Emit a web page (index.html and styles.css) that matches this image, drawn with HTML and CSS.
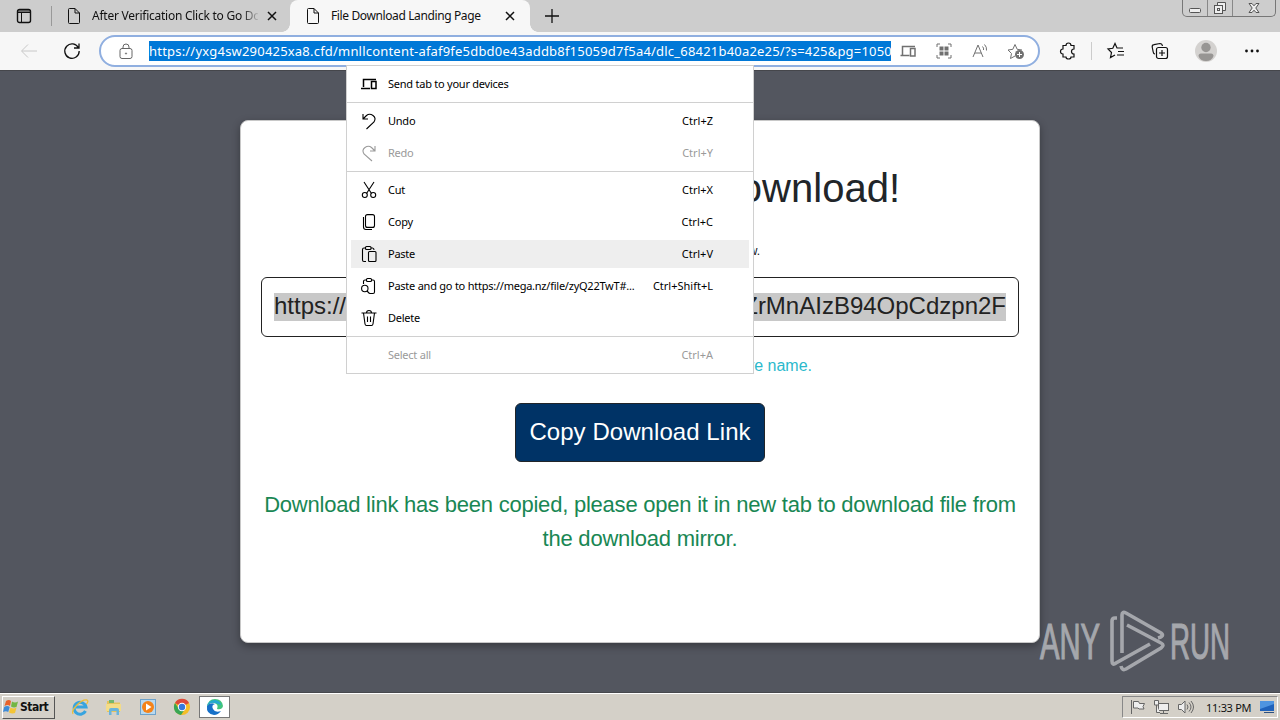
FILE: index.html
```html
<!DOCTYPE html>
<html lang="en">
<head>
<meta charset="utf-8">
<title>File Download Landing Page</title>
<link rel="stylesheet" href="styles.css">
</head>
<body>
<div class="desktop">
  <header class="tabbar">
    <svg class="tabactions" width="16" height="16" viewBox="0 0 16 16"><rect x="1.500" y="1.500" width="13" height="13" rx="2" stroke-width="1.400"/><path d="M2 3h12M2 4.500h12M5.500 5v9"/></svg>
    <span class="tabsep"></span>
    <div class="tab">
      <svg class="doc" width="14" height="18" viewBox="0 0 14 18"><path d="M1.500 2.500q0-1 1-1H8l4.500 4.500V15.500q0 1-1 1h-9q-1 0-1-1zM8 1.500V6h4.500"/></svg>
      <span class="tabtitle first">After Verification Click to Go Do</span>
      <svg class="close" width="10" height="10" viewBox="0 0 10 10"><path d="M1 1l8 8M9 1L1 9"/></svg>
    </div>
    <div class="tab active">
      <svg class="doc" width="14" height="18" viewBox="0 0 14 18"><path d="M1.500 2.500q0-1 1-1H8l4.500 4.500V15.500q0 1-1 1h-9q-1 0-1-1zM8 1.500V6h4.500"/></svg>
      <span class="tabtitle second">File Download Landing Page</span>
      <svg class="close" width="10" height="10" viewBox="0 0 10 10"><path d="M1 1l8 8M9 1L1 9"/></svg>
    </div>
    <svg class="plus" width="16" height="16" viewBox="0 0 16 16"><path d="M8 1v14M1 8h14"/></svg>
    <div class="wincontrols">
      <span class="winbtn"><svg width="14" height="14" viewBox="0 0 14 14"><rect x="1.500" y="7.500" width="11" height="4" rx="1"/></svg></span>
      <span class="winbtn"><svg width="14" height="14" viewBox="0 0 14 14"><path d="M4.500 4V1.500h8v8H10"/><rect x="1.500" y="4.500" width="8" height="8"/><rect x="4.500" y="7.500" width="2" height="2"/></svg></span>
      <span class="winbtn wide"><svg width="14" height="14" viewBox="0 0 14 14"><path d="M2 2.500h3l2 2.300 2-2.300h3L8.800 7l3.200 4.500H9L7 9.200l-2 2.300H2L5.200 7z"/></svg></span>
    </div>
  </header>

  <nav class="toolbar">
    <svg class="back" width="18" height="16" viewBox="0 0 18 16"><path d="M17 8H2M8 1.500L1.500 8 8 14.500"/></svg>
    <svg class="reload" width="18" height="18" viewBox="0 0 18 18"><path d="M15.500 6A7.200 7.200 0 1 0 16.200 9M16 1.500V6h-5"/></svg>
    <div class="address">
      <svg class="lock" width="14" height="17" viewBox="0 0 14 17"><rect x="1" y="5.500" width="12" height="10" rx="2"/><path d="M4 5.500V4q0-3 3-3t3 3v1.500"/><circle cx="7" cy="10.500" r=".6"/></svg>
      <span class="url">https://yxg4sw290425xa8.cfd/mnllcontent-afaf9fe5dbd0e43addb8f15059d7f5a4/dlc_68421b40a2e25/?s=425&amp;pg=1050</span>
      <div class="tools">
        <svg width="16" height="14" viewBox="0 0 16 14"><path d="M2.500 10V2.500H15M.5 11.500h9M2.500 11V3" stroke-width="1.500"/><rect x="10.500" y="4.500" width="4.500" height="7.500" stroke-width="1.500"/></svg>
        <svg width="16" height="16" viewBox="0 0 16 16"><path d="M1 4V1h3M12 1h3v3M15 12v3h-3M4 15H1v-3"/><path class="fill" d="M3.500 3.500h4v4h-4zM8.500 3.500h4v4h-4zM3.500 8.500h4v4h-4zM8.500 8.500h4v4h-4z"/></svg>
        <svg width="17" height="16" viewBox="0 0 17 16"><path d="M1 14L6 2l5 12M3 10h6M10.500 3.500q1.500 1.500 1 3.500M12.500 1.500q2.500 2.500 2 6"/></svg>
        <svg class="addfav" width="18" height="17" viewBox="0 0 18 17"><path d="M8 13l-4.500 2.500 1-5L1 7l4.800-.7L8 1.500l2.200 4.800L15 7"/><circle class="fill" cx="12.500" cy="11.500" r="4.500"/><path class="white" d="M12.500 9v5M10 11.500h5"/></svg>
      </div>
    </div>
    <div class="actions">
      <svg width="18" height="18" viewBox="0 0 18 18"><path d="M4 3.500h3q0-2.500 2.500-2.500T12 3.500h3V7q-2.500 0-2.500 2.500T15 12v3h-3q0 2-2.500 2T7 15H4v-3q-2.500 0-2.500-2.500T4 7z"/></svg>
      <span class="divider"></span>
      <svg class="fav" width="18" height="18" viewBox="0 0 18 18"><path d="M8 13l-4.500 2.500 1-5L1 7l4.800-.7L8 1.500l2 4.500h6M11 9.500h6M10 13h7"/></svg>
      <svg class="coll" width="18" height="18" viewBox="0 0 18 18"><path d="M4 12Q2.500 12 2.200 10L1.200 5Q1 3 3 2.700L9 1.500q2 0 2.500 2.500"/><rect x="5.500" y="5.500" width="11" height="11" rx="2"/><path d="M11 8v6M8 11h6"/></svg>
      <svg class="avatar" width="24" height="24" viewBox="0 0 24 24"><circle cx="12" cy="12" r="11" fill="#d4d2d0"/><circle cx="12" cy="8.500" r="4.700" fill="#979593"/><path d="M4.500 17q0-2.500 2.500-2.500h10q2.500 0 2.500 2.500-1.500 5-7.500 5t-7.500-5" fill="#979593"/></svg>
      <svg class="dots" width="16" height="4" viewBox="0 0 16 4"><circle cx="2.500" cy="2" r="1.400"/><circle cx="8" cy="2" r="1.400"/><circle cx="13.500" cy="2" r="1.400"/></svg>
    </div>
  </nav>

  <main class="page">
    <section class="card">
      <h1>Download!</h1>
      <p class="hint">w.</p>
      <div class="linkbox"><span class="sel"><span>https://</span><span>ZrMnAIzB94OpCdzpn2F</span></span></div>
      <p class="note">ve name.</p>
      <button class="copy">Copy Download Link</button>
      <p class="success">Download link has been copied, please open it in new tab to download file from<br>the download mirror.</p>
    </section>
    <div class="watermark">
      <svg width="194" height="64" viewBox="0 0 194 64">
        <g class="wtext"><text x="1" y="50" textLength="60" lengthAdjust="spacingAndGlyphs">ANY</text><text x="131" y="50" textLength="60" lengthAdjust="spacingAndGlyphs">RUN</text></g>
        <path d="M78 9h-2q-3 0-3 3v40q0 5 4 2l34-19M83 44V6q0-4 4-2l35 20q4 3-3 5M88 16l34 18q4 2 0 5L87 60q-4 2-5-3"/>
      </svg>
    </div>
  </main>

  <footer class="taskbar">
    <div class="start">
      <svg width="17" height="16" viewBox="0 0 17 16"><path d="M3 2q3-2 5 0L7 7Q5 5 1.500 7z" fill="#e8622b"/><path d="M9 2.500q3 2 6 0L13.500 8q-3 1-5.500-.5z" fill="#72b643"/><path d="M1.200 8q3-2 5.500 0l-1.500 5Q3 11.500 0 13z" fill="#3d8bd8"/><path d="M7.500 8.500q3 2 6 0L12 14q-3 1-6-.5z" fill="#f4c536"/></svg>
      <b>Start</b>
    </div>
    <div class="pinned">
      <svg width="18" height="18" viewBox="0 0 18 18"><path d="M14.500 13A6 6 0 1 1 15 9H5" fill="none" stroke="#38a4df" stroke-width="3"/><path d="M2 16Q0 13 6 7t10-5q2 1-.5 4" fill="none" stroke="#edbd37" stroke-width="1.300"/></svg>
      <svg width="18" height="18" viewBox="0 0 18 18"><path d="M2 3h5l1 1.500h7V14H2z" fill="#e5c35c"/><path d="M4 2h5v3H4z" fill="#72b76d"/><path d="M1 6h15v7H1z" fill="#f3dc88"/><path d="M4 17v-5q0-2 2-2h6q2 0 2 2v5h-2.500v-4h-5v4z" fill="#69b4dc"/></svg>
      <svg width="18" height="18" viewBox="0 0 18 18"><rect x="1.500" y="1.500" width="15" height="15" fill="#b9d9ef" stroke="#6da2cb"/><circle cx="9" cy="9" r="6" fill="#f58319"/><path d="M7 5.500l5.500 3.500L7 12.500z" fill="#fff"/></svg>
      <svg width="18" height="18" viewBox="0 0 18 18"><circle cx="9" cy="9" r="8" fill="#f4bd27"/><path d="M9 9L2 5a8 8 0 0 1 14 0z" fill="#dd493a"/><path d="M2 5a8 8 0 0 0 6 12l4-6H6z" fill="#39a654"/><circle cx="9" cy="9" r="4.200" fill="#fff"/><circle cx="9" cy="9" r="3.200" fill="#3679dc"/></svg>
    </div>
    <div class="current"><svg width="18" height="18" viewBox="0 0 18 18"><path d="M1 9Q2 1 9 1t8 7q-1 4-6 3 2-5-3-6Q4 4 1 9" fill="#42c47d"/><path d="M1 8q1-5 7-6 6 0 7 5L9 5Q4 4 1 8" fill="#25a8d0"/><path d="M1 8q3-4 8-2-4 1-2 5 2 4 8 2-3 4-7 4Q0 16 1 8" fill="#1670c8"/></svg></div>
    <div class="tray">
      <svg width="17" height="16" viewBox="0 0 17 16"><path d="M2.500 1v14M4.500 2.500h5l1 2h5l-1.500 3 1 2.500h-5L9 9H4.500z"/></svg>
      <svg width="17" height="16" viewBox="0 0 17 16"><rect x="5.500" y="4.500" width="10" height="7"/><path d="M10.500 12v2M7 14.500h8M1.500 1.500h4V6h-4zM3.500 6v7.500H7"/></svg>
      <svg width="17" height="16" viewBox="0 0 17 16"><path d="M1.500 5.500h3L8 2v12l-3.500-3.500h-3z"/><path fill="none" d="M10 5.500q2 2.500 0 5M12 3.500q4 4.500 0 9M14 2q5 6 0 12"/></svg>
      <span class="clock">11:33 PM</span>
      <svg class="show" width="16" height="14" viewBox="0 0 16 14"><rect x="1" y="1" width="14" height="10" fill="#1f62bb"/><path d="M1 1h14v3L1 9z" fill="#4e94e0"/><path d="M5 12h10v1H5z" fill="#2d5080"/></svg>
    </div>
  </footer>

  <div class="menu">
    <div class="group"><div class="item"><svg width="16" height="16" viewBox="0 0 16 16"><path d="M2.500 11V3.500H15M0 12.500h9" stroke-width="1.500"/><rect x="10.500" y="5.500" width="4.500" height="7" stroke-width="1.500"/></svg><span>Send tab to your devices</span></div></div>
    <div class="group">
      <div class="item"><svg width="16" height="16" viewBox="0 0 16 16"><path d="M2 1v5h5M2 6L5.500 2.500q3-2.500 6.500 0t1 6.500L5.500 16"/></svg><span>Undo</span><kbd>Ctrl+Z</kbd></div>
      <div class="item off"><svg width="16" height="16" viewBox="0 0 16 16"><path d="M14 1v5H9M14 6l-3.500-3.500Q7.500 0 4 2.500T3 9l8 7"/></svg><span>Redo</span><kbd>Ctrl+Y</kbd></div>
    </div>
    <div class="group">
      <div class="item"><svg width="16" height="16" viewBox="0 0 16 16"><path d="M3 0l7.500 11.500M13 0L5.500 11.500"/><circle cx="3.800" cy="13" r="2.500"/><circle cx="12.200" cy="13" r="2.500"/></svg><span>Cut</span><kbd>Ctrl+X</kbd></div>
      <div class="item"><svg width="16" height="16" viewBox="0 0 16 16"><rect x="4.500" y=".6" width="9" height="12.800" rx="2"/><path d="M2.500 3v10q0 2.500 2.500 2.500h6"/></svg><span>Copy</span><kbd>Ctrl+C</kbd></div>
      <div class="item hover"><svg width="16" height="16" viewBox="0 0 16 16"><path d="M5 15.500H3q-1.500 0-1.500-1.500V3.500Q1.500 2 3 2h1.500M10 2h1.500Q13 2 13 4"/><rect x="4.500" y=".5" width="5.500" height="3" rx="1"/><rect x="7.500" y="5.500" width="7.500" height="10" rx="1"/></svg><span>Paste</span><kbd>Ctrl+V</kbd></div>
      <div class="item"><svg width="16" height="16" viewBox="0 0 16 16"><path d="M2.500 6V3.500Q2.500 2 4 2h1.500M10.500 2H12q1.500 0 1.500 1.500V14q0 1.500-1.500 1.500H8.500M6 13l2.500 2.500"/><rect x="5.500" y=".5" width="5" height="3" rx="1"/><circle cx="3.800" cy="10.500" r="3.200"/></svg><span class="go">Paste and go to https://mega.nz/file/zyQ22TwT#...</span><kbd>Ctrl+Shift+L</kbd></div>
      <div class="item"><svg width="16" height="16" viewBox="0 0 16 16"><path d="M.5 3h15M5.500 3q0-2.500 2.500-2.500T10.500 3M2.500 3L4 14q.3 1.500 1.500 1.500h5q1.200 0 1.500-1.500L13.500 3M6.500 6.500v5.500M9.500 6.500v5.500"/></svg><span>Delete</span></div>
    </div>
    <div class="group"><div class="item off"><i></i><span>Select all</span><kbd>Ctrl+A</kbd></div></div>
  </div>
</div>
</body>
</html>
```
FILE: styles.css
```css
* { box-sizing: border-box; }
body { margin: 0; font-family: "Noto Sans", sans-serif; font-size: 11px; color: #111; }
svg { display: block; flex: none; fill: none; stroke: currentColor; overflow: visible; }
.desktop { position: relative; width: 1280px; height: 720px; overflow: hidden; display: flex; flex-direction: column; }

.tabbar { height: 32px; background: #cdcdcd; display: flex; align-items: center; flex: none; }
.tabactions { margin-left: 16px; }
.tabsep { width: 1px; height: 20px; background: #999; margin-left: 19px; }
.tab { width: 238px; height: 32px; display: flex; align-items: center; padding-left: 15px; }
.tab.active { background: #f7f7f7; border-radius: 8px 8px 0 0; width: 240px; padding-left: 16px; position: relative; }
.tab.active::before, .tab.active::after { content: ""; position: absolute; bottom: 0; width: 8px; height: 8px; }
.tab.active::before { left: -8px; background: radial-gradient(circle at 0 0, #cdcdcd 7.500px, #f7f7f7 8px); }
.tab.active::after { right: -8px; background: radial-gradient(circle at 100% 0, #cdcdcd 7.500px, #f7f7f7 8px); }
.tabtitle { font-size: 12px; line-height: 20px; white-space: nowrap; flex: none; }
.first { width: 166px; margin-left: 11px; letter-spacing: -.25px; -webkit-mask-image: linear-gradient(90deg, #000 150px, transparent 168px); mask-image: linear-gradient(90deg, #000 150px, transparent 168px); }
.second { width: 175px; margin-left: 11px; letter-spacing: -.38px; }
.close { margin-left: 9px; stroke-width: 1.500; }
.active .close { margin-left: -1px; }
.plus { margin-left: 14px; stroke-width: 1.300; }
.wincontrols { display: flex; align-self: flex-start; height: 17px; margin-left: auto; margin-right: 4px; border: 1px solid #777; border-top: 0; border-radius: 0 0 5px 5px; color: #555; }
.winbtn { width: 25px; display: flex; justify-content: center; align-items: center; border-right: 1px solid #888; }
.winbtn svg { fill: #eee; }
.winbtn.wide { width: 42px; border: 0; }

.toolbar { height: 38px; background: #f7f7f7; display: flex; align-items: center; flex: none; }
.back { margin-left: 20px; color: #c8c8c8; }
.reload { margin-left: 25px; stroke-width: 1.300; }
.address { width: 941px; height: 32px; margin-left: 18px; border: 2px solid #90afe0; border-radius: 16px; background: #fff; display: flex; align-items: center; flex: none; }
.lock { margin-left: 18px; color: #666; }
.url { width: 742px; height: 20px; margin-left: 16px; background: #0078d7; color: #fff; font-size: 13px; line-height: 20px; white-space: nowrap; overflow: hidden; letter-spacing: .2px; flex: none; }
.tools { display: flex; align-items: center; gap: 20px; margin-left: 9px; color: #707070; }
.addfav { margin-left: -2px; }
.fill { fill: #707070; stroke: none; }
.white { stroke: #fff; }
.actions { display: flex; align-items: center; margin-left: 19px; stroke-width: 1.200; }
.divider { width: 1px; height: 18px; background: #ccc; margin-left: 14px; }
.fav { margin-left: 15px; }
.coll { margin-left: 26px; }
.avatar { margin-left: 25px; stroke: none; }
.dots { margin-left: 26px; fill: #111; stroke: none; }

.page { height: 623px; flex: none; position: relative; background: #53565f; border-top: 1px solid #45464b; border-bottom: 1px solid #47484d; font-family: "Liberation Sans", Arial, sans-serif; }
.card { width: 800px; height: 523px; margin: 49px auto 0; background: #fff; border: 1px solid #c8c8c8; border-radius: 8px; box-shadow: 0 3px 8px #0005; padding: 43px 20px 0; }
.card p, .card h1 { margin: 0; }
.card h1 { font-size: 40px; font-weight: 500; line-height: 48px; color: #212529; text-align: right; padding-right: 119px; white-space: nowrap; }
.hint { font-size: 12px; line-height: 18px; height: 18px; text-align: right; padding-right: 259px; margin-top: 30px !important; }
.linkbox { height: 60px; margin-top: 17px; border: 1px solid #222; border-radius: 6px; padding: 15px 12px; }
.sel { display: flex; justify-content: space-between; height: 28px; width: 732px; background: #c8c8c8; font-size: 24px; line-height: 26px; color: #222; white-space: nowrap; }
.note { font-size: 16px; line-height: 24px; color: #2bb9cc; text-align: right; padding-right: 207px; margin-top: 17px !important; }
.copy { display: block; width: 250px; height: 59px; margin: 25px auto 0; padding: 0 0 2px; background: #003366; border: 1px solid #212529; border-radius: 6px; color: #fff; font: 24px "Liberation Sans", Arial, sans-serif; letter-spacing: .06px; white-space: nowrap; }
.success { margin-top: 26px !important; color: #198754; font-size: 22px; line-height: 34px; text-align: center; white-space: nowrap; letter-spacing: -.225px; }
.watermark { position: absolute; left: 1039px; top: 538px; color: #a5a7ac; }
.watermark path { stroke-width: 3.600; }
.wtext { fill: currentColor; stroke: currentColor; stroke-width: 1.200; font: 50px "Liberation Sans Narrow", "Liberation Sans", sans-serif; }

.taskbar { height: 27px; flex: none; background: #d4d0c8; border-top: 1px solid #fff; display: flex; align-items: center; }
.start { width: 53px; height: 23px; margin-left: 2px; display: flex; align-items: center; border: 1px solid; border-color: #fff #555 #555 #fff; font: 12px "DejaVu Sans Condensed", sans-serif; }
.start svg, .pinned svg, .current svg { stroke: none; }
.start b { letter-spacing: -.5px; }
.pinned { display: flex; gap: 16px; margin-left: 16px; }
.current { width: 31px; height: 22px; background: #fff; border: 1px solid #777; margin-left: 8px; display: flex; justify-content: center; align-items: center; }
.tray { width: 156px; height: 22px; margin-left: auto; margin-right: 2px; border: 1px solid; border-color: #888 #fff #fff #888; display: flex; align-items: center; padding-left: 6px; gap: 7px; color: #666; }
.tray svg { fill: #eee; }
.clock { width: 46px; margin-left: 5px; font-size: 11px; color: #111; white-space: nowrap; letter-spacing: -.3px; }
.tray .show { stroke: none; }

.menu { position: absolute; left: 346px; top: 65px; width: 408px; height: 309px; background: #fff; border: 1px solid #d0d0d0; color: #000; }
.group { padding: 2px 4px; border-top: 1px solid #d0d0d0; }
.group:first-child { border-top: 0; }
.item { height: 32px; display: flex; align-items: center; padding-left: 10px; padding-right: 36px; white-space: nowrap; }
.item svg { stroke-width: 1.100; }
.item span { margin-left: 11px; padding-bottom: 2px; letter-spacing: -.24px; }
.item i { width: 16px; }
.item kbd { margin-left: auto; padding-bottom: 2px; font: inherit; letter-spacing: 0; }
.off { color: #9a9a9a; }
.hover { background: linear-gradient(#eee, #eee) center / 100% 28px no-repeat; }
```
